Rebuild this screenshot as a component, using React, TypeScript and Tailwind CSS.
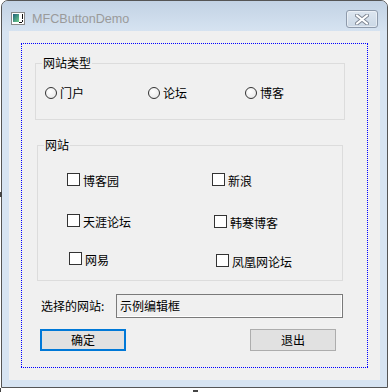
import React from 'react';

// MFC dialog: window frame, a dotted focus rect, two group boxes, an edit and two buttons.
const cjk = { fontFamily: '"Noto Sans CJK SC", "Noto Sans", sans-serif' };

function Radio({ label, className = '' }: { label: string; className?: string }) {
  return (
    <div className={`flex items-center gap-[3px] ${className}`}>
      <span className="h-[12px] w-[12px] rounded-full border border-[#333333] bg-[radial-gradient(circle_at_40%_35%,#ffffff,#e4e4e4)]" />
      <span className="text-[12px] leading-[14px] text-black">{label}</span>
    </div>
  );
}

function Check({ label, className = '' }: { label: string; className?: string }) {
  return (
    <div className={`flex items-start gap-[3px] ${className}`}>
      <span className="h-[13px] w-[13px] shrink-0 border border-[#333333] bg-white" />
      <span className="mt-[1px] text-[12px] leading-[14px] text-black">{label}</span>
    </div>
  );
}

function GroupLabel({ text, top }: { text: string; top: string }) {
  return (
    <span className={`absolute left-[6px] ${top} bg-[#f0f0f0] px-[1px] text-[12px] leading-[14px] text-black`}>
      {text}
    </span>
  );
}

function AppIcon() {
  return (
    <svg width="14" height="13" viewBox="0 0 14 13" className="mt-[11px] shrink-0">
      <defs>
        <linearGradient id="ig" x1="0" y1="0" x2="1" y2="1">
          <stop offset="0" stopColor="#1f5f7a" />
          <stop offset="1" stopColor="#6fd08c" />
        </linearGradient>
      </defs>
      <rect x="0.5" y="0.5" width="13" height="12" fill="#ffffff" stroke="#8a8a8a" />
      <rect x="2" y="2" width="6" height="8" fill="url(#ig)" />
      <rect x="11" y="2" width="1" height="5" fill="#111" />
      <rect x="11" y="8" width="1" height="2" fill="#111" />
      <rect x="8" y="10" width="3" height="1" fill="#111" />
    </svg>
  );
}

function CloseButton() {
  return (
    <div className="ml-auto mr-[9px] mt-[9px] flex h-[18px] w-[32px] items-center justify-center rounded-[3px] border border-[#8e9aab] bg-gradient-to-b from-[#dde6f0] to-[#cbd8e6] shadow-[inset_0_0_0_1px_rgba(255,255,255,0.45)]">
      <svg width="14" height="11" viewBox="0 0 14 11">
        <path d="M2 1.5 L12 9.5 M12 1.5 L2 9.5" stroke="#7f8794" strokeWidth="4" strokeLinecap="round" />
        <path d="M2 1.5 L12 9.5 M12 1.5 L2 9.5" stroke="#ffffff" strokeWidth="2.2" strokeLinecap="round" />
      </svg>
    </div>
  );
}

export default function App() {
  return (
    <div className="relative h-[392px] w-[388px] overflow-hidden bg-white" style={cjk}>
      <div className="ml-[1px] flex h-[388px] w-[387px] flex-col rounded-t-[7px] border border-[#555555] bg-[#d7e4f2]">
        {/* title bar */}
        <div className="flex h-[30px] shrink-0 items-start rounded-t-[6px] bg-gradient-to-b from-[#c2d2e4] to-[#d6e3f1] pl-[9px]">
          <AppIcon />
          <span
            className="ml-[7px] mt-[11px] text-[12.6px] leading-[15px] text-[#9a9a9a]"
            style={{ fontFamily: '"Liberation Sans", Arial, sans-serif' }}
          >
            MFCButtonDemo
          </span>
          <CloseButton />
        </div>

        {/* client area */}
        <div className="mx-[7px] h-[349px] w-[371px] bg-[#f0f0f0] pt-[12px] pl-[12px]">
          {/* focus rect: 1px on / 1px off blue dots */}
          <div className="flex h-[325px] w-[347px] flex-col p-[1px] [background-image:linear-gradient(90deg,#0000ff_50%,transparent_50%),linear-gradient(90deg,#0000ff_50%,transparent_50%),linear-gradient(0deg,#0000ff_50%,transparent_50%),linear-gradient(0deg,#0000ff_50%,transparent_50%)] [background-size:2px_1px,2px_1px,1px_2px,1px_2px] [background-repeat:repeat-x,repeat-x,repeat-y,repeat-y] [background-position:0_0,0_100%,0_0,100%_0]">
            {/* 网站类型 */}
            <div className="relative ml-[13px] mt-[19px] h-[57px] w-[310px] border border-[#dcdcdc]">
              <GroupLabel text="网站类型" top="top-[-8px]" />
              <div className="mt-[22px] flex items-center">
                <Radio label="门户" className="ml-[9px] w-[103px]" />
                <Radio label="论坛" className="w-[97px]" />
                <Radio label="博客" />
              </div>
            </div>

            {/* 网站 */}
            <div className="relative ml-[15px] mt-[25px] h-[136px] w-[306px] border border-[#dcdcdc]">
              <GroupLabel text="网站" top="top-[-8px]" />
              <div className="mt-[27px] flex items-start">
                <Check label="博客园" className="ml-[29px] w-[145px]" />
                <Check label="新浪" />
              </div>
              <div className="mt-[26px] flex items-start">
                <Check label="天涯论坛" className="ml-[29px] w-[147px]" />
                <Check label="韩寒博客" className="mt-[1px]" />
              </div>
              <div className="mt-[22px] flex items-start">
                <Check label="网易" className="ml-[31px] w-[147px]" />
                <Check label="凤凰网论坛" className="mt-[2px]" />
              </div>
            </div>

            {/* edit row */}
            <div className="ml-[19px] mt-[13px] flex items-center">
              <span className="w-[75px] text-[12px] leading-[14px] text-black">选择的网站:</span>
              <div className="flex h-[24px] w-[227px] items-center border border-[#7a7a7a] bg-[#f0f0f0] pl-[3px] shadow-[inset_-1px_-1px_0_#ffffff]">
                <span className="text-[12px] leading-[14px] text-black">示例编辑框</span>
              </div>
            </div>

            {/* buttons */}
            <div className="ml-[18px] mt-[11px] flex">
              <button className="flex h-[22px] w-[86px] items-center justify-center border-2 border-[#0078d7] bg-[#e1e1e1] text-[12px] leading-[14px] text-black">
                确定
              </button>
              <button className="ml-[124px] flex h-[22px] w-[86px] items-center justify-center border border-[#adadad] bg-[#e1e1e1] text-[12px] leading-[14px] text-black">
                退出
              </button>
            </div>
          </div>
        </div>
      </div>

      {/* stray resize marks outside the window */}
      <span className="absolute left-0 top-[192px] h-[5px] w-[2px] bg-[#444444]" />
      <span className="absolute left-0 top-[388px] h-[4px] w-[1px] bg-[#444444]" />
      <span className="absolute left-[193px] top-[390px] h-[2px] w-[5px] bg-[#444444]" />
    </div>
  );
}
